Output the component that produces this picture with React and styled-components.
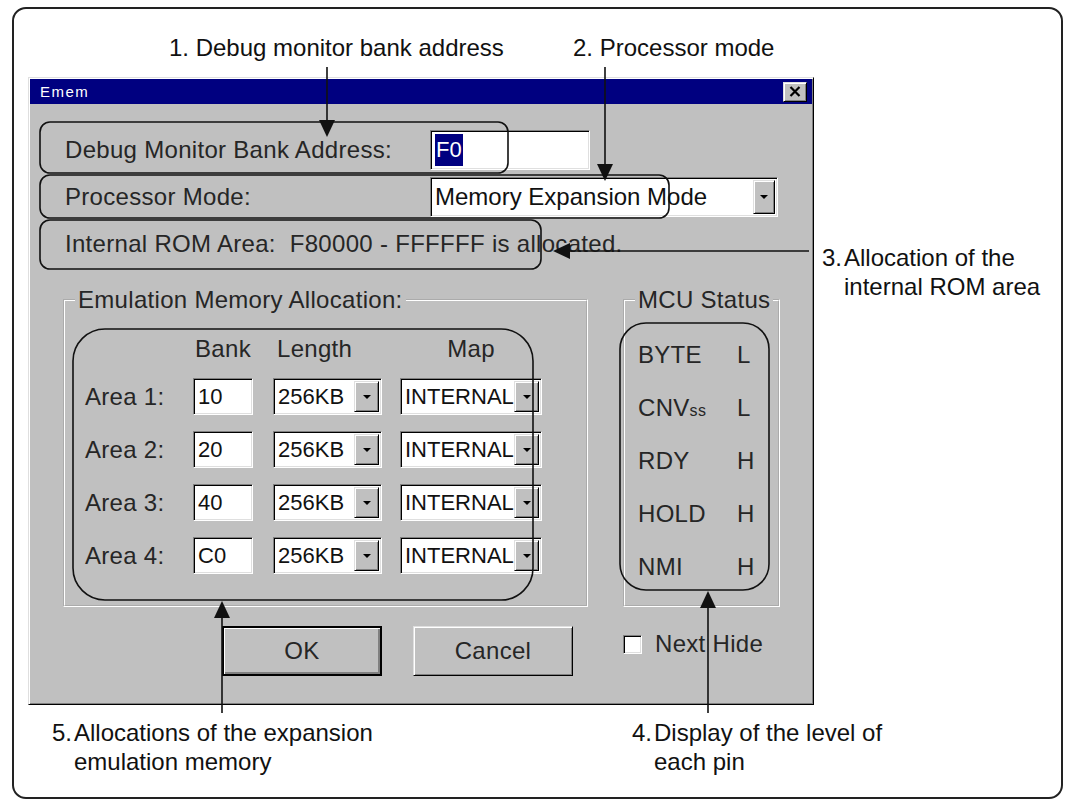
import React from "react";
import styled, { createGlobalStyle } from "styled-components";

const GlobalStyle = createGlobalStyle`
  html, body { margin: 0; padding: 0; background: #fff; }
  body { font-family: "Liberation Sans", Arial, sans-serif; color: #111; }
  * { box-sizing: border-box; }
`;

const Figure = styled.div`
  position: relative;
  margin: 7px 0 0 12px;
  width: 1051px;
  height: 792px;
  border: 2px solid #222;
  border-radius: 14px;
  display: flex;
  flex-direction: column;
`;

const Overlay = styled.svg`
  position: absolute;
  left: -14px;
  top: -9px;
  pointer-events: none;
`;

const TopNotes = styled.div`
  height: 68px;
  padding: 24px 0 0 155px;
  display: grid;
  grid-template-columns: 404px auto;
`;

const MidRow = styled.div`
  display: flex;
  align-items: flex-start;
`;

const BottomNotes = styled.div`
  padding: 13px 0 0 38px;
  display: grid;
  grid-template-columns: 580px auto;
`;

const Note = styled.div`
  font-size: 24px;
  line-height: 29px;
  color: #111;
  white-space: nowrap;
  display: grid;
  grid-template-columns: ${(p) => (p.$num ? "22px auto" : "auto")};
  margin: ${(p) => p.$margin || "0"};
`;

const Dialog = styled.div`
  margin-left: 14px;
  width: 786px;
  height: 628px;
  background: #c0c0c0;
  border: 1px solid;
  border-color: #dfdfdf #000 #000 #dfdfdf;
  box-shadow: inset 1px 1px #fff, inset -1px -1px #808080;
  padding: 1px;
  display: flex;
  flex-direction: column;
  color: #262626;
  font-size: 24px;
  letter-spacing: 0.3px;
`;

const TitleBar = styled.div`
  height: 25px;
  background: #000080;
  display: flex;
  align-items: center;
  justify-content: space-between;
  padding: 0 5px 0 10px;
  color: #fff;
  font-size: 15px;
  letter-spacing: 1.5px;
`;

const Raised = styled.div`
  background: #c0c0c0;
  border: 1px solid;
  border-color: #dfdfdf #000 #000 #dfdfdf;
  box-shadow: inset 1px 1px #fff, inset -1px -1px #808080;
  display: flex;
  align-items: center;
  justify-content: center;
`;

const CloseBtn = styled(Raised)`
  width: 24px;
  height: 20px;
`;

const Body = styled.div`
  padding: 22px 0 0 35px;
`;

const FieldRow = styled.div`
  height: 47px;
  display: grid;
  grid-template-columns: 365px auto;
  align-items: center;
  white-space: nowrap;
`;

const Field = styled.div`
  width: ${(p) => p.$w}px;
  height: ${(p) => p.$h}px;
  background: #fff;
  border: 1px solid;
  border-color: #808080 #fff #fff #808080;
  box-shadow: inset 1px 1px #000, inset -1px -1px #dfdfdf;
  display: flex;
  align-items: center;
  justify-content: space-between;
  padding: 2px 2px 2px 4px;
  font-size: ${(p) => p.$fs || 22}px;
  letter-spacing: 0;
  color: #111;
  white-space: nowrap;
`;

const Selected = styled.span`
  background: #000080;
  color: #fff;
  line-height: 32px;
  padding: 0 1px;
`;

const DropBtn = styled(Raised)`
  flex: none;
  width: ${(p) => p.$w || 22}px;
  height: 100%;
  &::after {
    content: "";
    border-left: 4px solid transparent;
    border-right: 4px solid transparent;
    border-top: 4px solid #000;
  }
`;

const Panes = styled.div`
  margin: 19px 0 0 -2px;
  display: flex;
  gap: 35px;
`;

const Column = styled.div`
  display: flex;
  flex-direction: column;
`;

const Group = styled.fieldset`
  margin: 0;
  width: ${(p) => p.$w}px;
  height: 321px;
  border: 2px groove #fff;
  padding: ${(p) => p.$pad};
  min-width: 0;
`;

const Legend = styled.legend`
  margin-left: ${(p) => p.$ml}px;
  padding: 0 3px;
  line-height: 28px;
  white-space: nowrap;
`;

const AreaGrid = styled.div`
  display: grid;
  grid-template-columns: 108px 80px 127px 142px;
  grid-template-rows: 27px repeat(4, 37px);
  row-gap: 16px;
  align-items: center;
  white-space: nowrap;
`;

const Head = styled.div`
  width: ${(p) => p.$w}px;
  text-align: ${(p) => p.$align};
  padding-left: ${(p) => p.$pl || 0}px;
`;

const PinGrid = styled.div`
  display: grid;
  grid-template-columns: 99px auto;
  grid-auto-rows: 36px;
  row-gap: 17px;
  align-items: center;
`;

const Small = styled.span`
  font-size: 16px;
`;

const ButtonRow = styled.div`
  margin-top: 19px;
  padding-left: ${(p) => p.$pl || 0}px;
  display: flex;
  align-items: center;
  gap: 31px;
`;

const PushButton = styled(Raised)`
  width: 160px;
  height: 50px;
  ${(p) =>
    p.$default &&
    `
    border: 2px solid #000;
    box-shadow: inset 1px 1px #fff, inset -1px -1px #808080, inset -2px -2px #808080;
  `}
`;

const CheckRow = styled.div`
  height: 36px;
  display: flex;
  align-items: center;
  gap: 13px;
`;

const Check = styled.div`
  width: 19px;
  height: 19px;
  background: #fff;
  border: 1px solid;
  border-color: #808080 #fff #fff #808080;
  box-shadow: inset 1px 1px #000, inset -1px -1px #dfdfdf;
`;

const areas = [
  { label: "Area 1:", bank: "10" },
  { label: "Area 2:", bank: "20" },
  { label: "Area 3:", bank: "40" },
  { label: "Area 4:", bank: "C0" },
];

const pins = [
  { name: "BYTE", level: "L" },
  { name: "CNV", sub: "ss", level: "L" },
  { name: "RDY", level: "H" },
  { name: "HOLD", level: "H" },
  { name: "NMI", level: "H" },
];

function Marks() {
  const ink = "#111";
  return (
    <Overlay width="1069" height="804" viewBox="0 0 1069 804">
      <g fill="none" stroke={ink} strokeWidth="1.6">
        <rect x="40" y="122" width="468" height="51" rx="10" />
        <rect x="40" y="175" width="629" height="43" rx="10" />
        <rect x="40" y="220" width="501" height="49" rx="10" />
        <rect x="73" y="329" width="460" height="271" rx="32" />
        <rect x="620" y="323" width="149" height="267" rx="26" />
        <path d="M327 67V122M605 67V166M809 251H568M708 713V606M222 713V616" />
      </g>
      <g fill={ink}>
        <path d="M319 120h16l-8 17z" />
        <path d="M597 164h16l-8 17z" />
        <path d="M570 243v16l-17 -8z" />
        <path d="M700 608h16l-8 -17z" />
        <path d="M214 618h16l-8 -17z" />
      </g>
    </Overlay>
  );
}

function Combo({ w, h, value, btn, fs }) {
  return (
    <Field $w={w} $h={h} $fs={fs}>
      <span>{value}</span>
      <DropBtn $w={btn} />
    </Field>
  );
}

function EmemDialog() {
  return (
    <Dialog>
      <TitleBar>
        <span>Emem</span>
        <CloseBtn>
          <svg width="12" height="11" viewBox="0 0 12 11">
            <path d="M1.5 1l9 9M10.5 1l-9 9" stroke="#000" strokeWidth="2.2" />
          </svg>
        </CloseBtn>
      </TitleBar>
      <Body>
        <FieldRow>
          <span>Debug Monitor Bank Address:</span>
          <Field $w={160} $h={40}>
            <Selected>F0</Selected>
          </Field>
        </FieldRow>
        <FieldRow>
          <span>Processor Mode:</span>
          <Combo w={348} h={40} fs={24} value="Memory Expansion Mode" btn={22} />
        </FieldRow>
        <FieldRow>
          <span>Internal ROM Area:&nbsp; F80000 - FFFFFF is allocated.</span>
        </FieldRow>
        <Panes>
          <Column>
            <Group $w={525} $pad="21px 0 0 20px">
              <Legend $ml={-10}>Emulation Memory Allocation:</Legend>
              <AreaGrid>
                <span />
                <Head $w={60} $align="center">Bank</Head>
                <Head $w={109} $align="left" $pl={4}>Length</Head>
                <Head $w={142} $align="center">Map</Head>
                {areas.map((a) => (
                  <React.Fragment key={a.label}>
                    <span>{a.label}</span>
                    <Field $w={60} $h={37}>{a.bank}</Field>
                    <Combo w={109} h={37} value="256KB" btn={25} />
                    <Combo w={142} h={37} value="INTERNAL" btn={25} />
                  </React.Fragment>
                ))}
              </AreaGrid>
            </Group>
            <ButtonRow $pl={159}>
              <PushButton $default>OK</PushButton>
              <PushButton>Cancel</PushButton>
            </ButtonRow>
          </Column>
          <Column>
            <Group $w={157} $pad="23px 0 0 13px">
              <Legend $ml={-3}>MCU Status</Legend>
              <PinGrid>
                {pins.map((p) => (
                  <React.Fragment key={p.name}>
                    <span>
                      {p.name}
                      {p.sub && <Small>{p.sub}</Small>}
                    </span>
                    <span>{p.level}</span>
                  </React.Fragment>
                ))}
              </PinGrid>
            </Group>
            <ButtonRow>
              <CheckRow>
                <Check />
                <span>Next Hide</span>
              </CheckRow>
            </ButtonRow>
          </Column>
        </Panes>
      </Body>
    </Dialog>
  );
}

export default function App() {
  return (
    <>
      <GlobalStyle />
      <Figure>
        <TopNotes>
          <Note>1. Debug monitor bank address</Note>
          <Note>2. Processor mode</Note>
        </TopNotes>
        <MidRow>
          <EmemDialog />
          <Note $num $margin="166px 0 0 8px">
            <span>3.</span>
            <span>
              Allocation of the
              <br />
              internal ROM area
            </span>
          </Note>
        </MidRow>
        <BottomNotes>
          <Note $num>
            <span>5.</span>
            <span>
              Allocations of the expansion
              <br />
              emulation memory
            </span>
          </Note>
          <Note $num>
            <span>4.</span>
            <span>
              Display of the level of
              <br />
              each pin
            </span>
          </Note>
        </BottomNotes>
        <Marks />
      </Figure>
    </>
  );
}
